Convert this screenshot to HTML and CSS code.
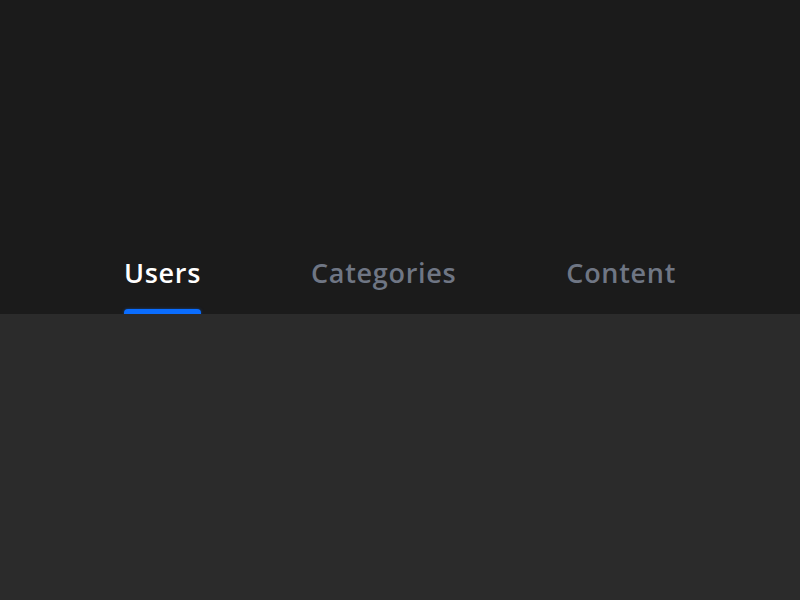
FILE: index.html
```html
<!DOCTYPE html>
<html lang="en">
<head>
<meta charset="utf-8">
<title>Tabs</title>
<link rel="stylesheet" href="styles.css">
</head>
<body>
  <header class="top">
    <nav class="tabs">
      <div class="tab tab-active"><span class="tab-label">Users</span><span class="tab-bar"></span></div>
      <div class="tab"><span class="tab-label">Categories</span><span class="tab-bar"></span></div>
      <div class="tab"><span class="tab-label">Content</span><span class="tab-bar"></span></div>
    </nav>
  </header>
  <main class="panel"></main>
</body>
</html>
```
FILE: styles.css
```css
html, body {
  margin: 0;
  height: 100%;
}
body {
  display: flex;
  flex-direction: column;
  background: #2b2b2b;
  font-family: "Open Sans", "Noto Sans", sans-serif;
}
.top {
  height: 314px;
  flex: none;
  background: #1b1b1b;
  display: flex;
  align-items: flex-end;
  justify-content: center;
}
.tabs {
  display: flex;
  gap: 110px;
}
.tab {
  display: flex;
  flex-direction: column;
  align-items: stretch;
}
.tab-label {
  font-size: 27px;
  font-weight: 600;
  line-height: 32px;
  color: #6f7684;
  letter-spacing: 0.7px;
}
.tab-active .tab-label {
  color: #ffffff;
}
.tab-bar {
  height: 5px;
  margin-top: 20px;
  border-radius: 4px 4px 0 0;
  background: transparent;
}
.tab-active .tab-bar {
  background: #0a6dff;
  box-shadow: 0 0 3px rgba(10, 109, 255, 0.5);
}
.panel {
  flex: 1;
  background: #2b2b2b;
}
```
